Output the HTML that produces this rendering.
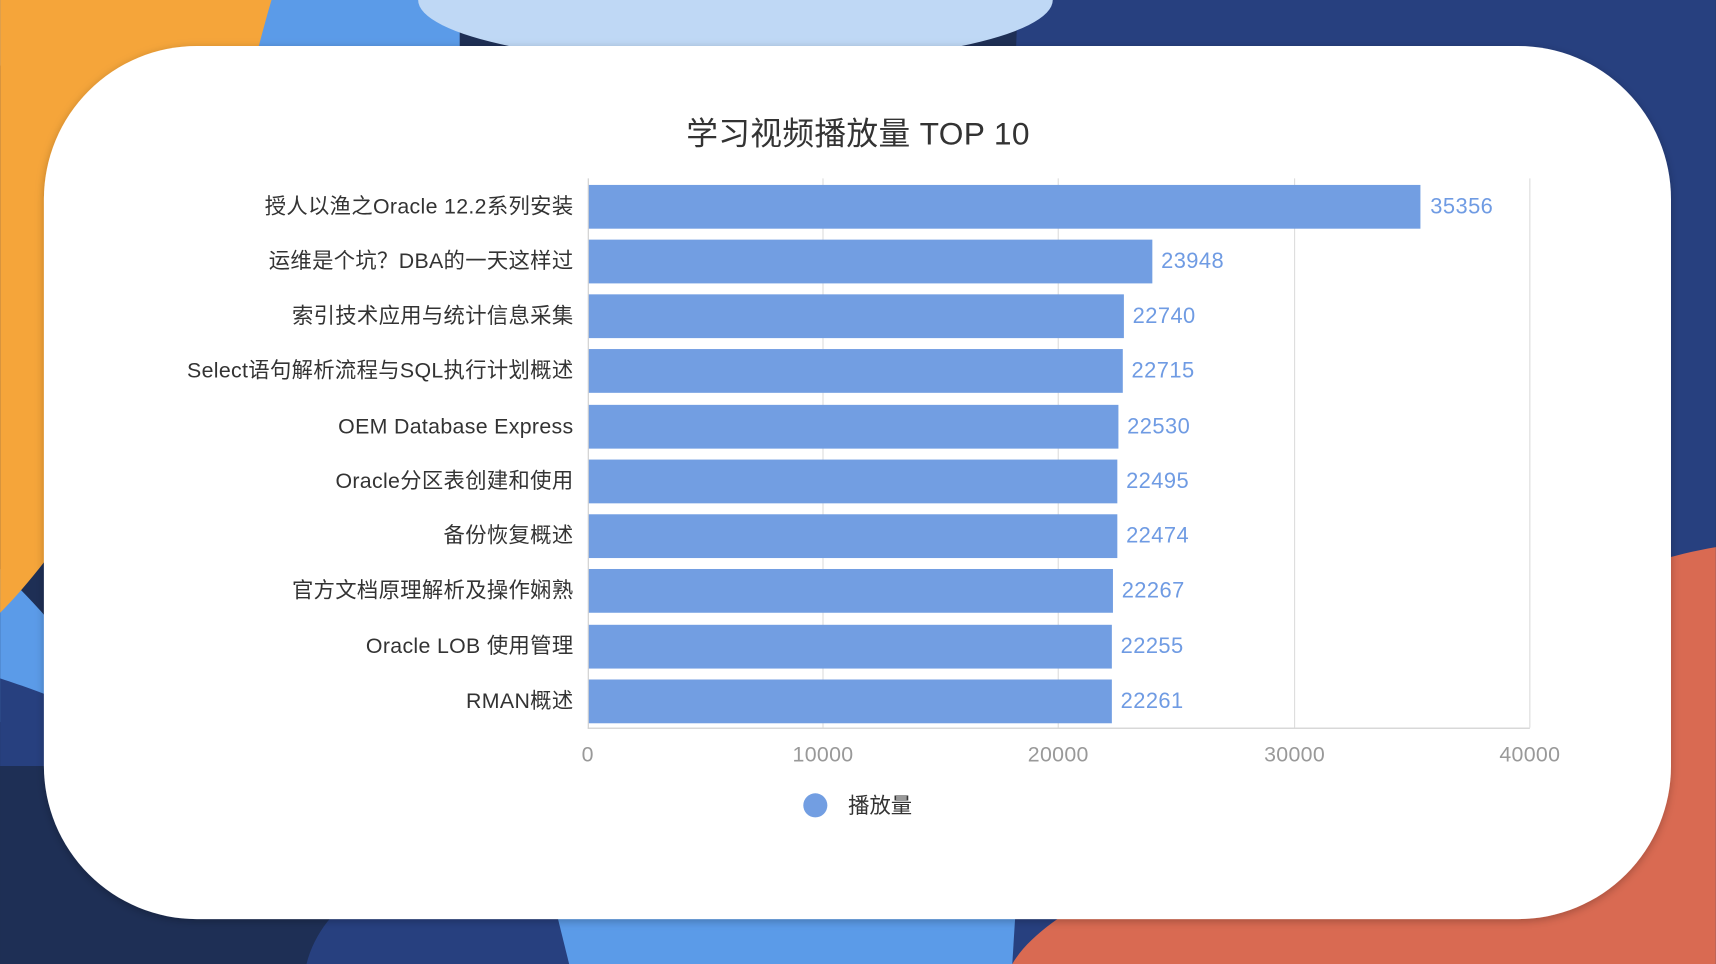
<!DOCTYPE html>
<html><head><meta charset="utf-8"><style>
html,body{margin:0;padding:0;width:1716px;height:964px;overflow:hidden;background:#1e2f55}
svg{display:block}
text{font-family:"Liberation Sans","Noto Sans CJK SC",sans-serif}
</style></head><body>
<svg width="1716" height="964" viewBox="0 0 1568 881" xmlns="http://www.w3.org/2000/svg">
<defs><filter id="sh" x="-5%" y="-5%" width="110%" height="110%"><feDropShadow dx="0" dy="2" stdDeviation="4" flood-color="#000" flood-opacity="0.25"/></filter></defs>
<rect width="1568" height="881" fill="#1e2f55"/>
<path d="M930 0 H1568 V881 H900 Z" fill="#27407f"/>
<path d="M1568 500 C1450 520 1300 600 1200 700 C1100 780 960 820 925 881 H1568 Z" fill="#d96a52"/>
<path d="M280 881 C300 800 420 760 520 800 C560 820 560 860 570 881 Z" fill="#27407f"/>
<path d="M500 800 C600 760 800 760 930 800 L925 881 H520 Z" fill="#5b9be8"/>
<path d="M0 0 H420 V60 H0 Z" fill="#5b9be8"/>
<path d="M0 520 C40 560 80 600 80 640 L0 660 Z" fill="#5b9be8"/>
<path d="M0 620 C60 640 120 660 60 700 L0 700 Z" fill="#27407f"/>
<path d="M0 0 H248 C230 60 200 200 150 320 C100 440 40 520 0 560 Z" fill="#f5a53a"/>
<ellipse cx="672" cy="0" rx="290" ry="60" fill="#bfd8f5"/>
<rect x="40" y="42" width="1487" height="798" rx="140" ry="140" fill="#fff" filter="url(#sh)"/>
<text x="784" y="132" text-anchor="middle" font-size="29" fill="#333" letter-spacing="0.3">学习视频播放量 TOP 10</text>
<g stroke="#dcdcdc" stroke-width="1">
<line x1="752" y1="163" x2="752" y2="665"/><line x1="967" y1="163" x2="967" y2="665"/>
<line x1="1183" y1="163" x2="1183" y2="665"/><line x1="1398" y1="163" x2="1398" y2="665"/>
</g>
<line x1="537.5" y1="163" x2="537.5" y2="666" stroke="#ccc"/>
<line x1="537" y1="665.5" x2="1398" y2="665.5" stroke="#ccc"/>
<g fill="#729ee2">
<rect x="538" y="169" width="760" height="40"/>
<rect x="538" y="219" width="515" height="40"/>
<rect x="538" y="269" width="489" height="40"/>
<rect x="538" y="319" width="488" height="40"/>
<rect x="538" y="370" width="484" height="40"/>
<rect x="538" y="420" width="483" height="40"/>
<rect x="538" y="470" width="483" height="40"/>
<rect x="538" y="520" width="479" height="40"/>
<rect x="538" y="571" width="478" height="40"/>
<rect x="538" y="621" width="478" height="40"/>
</g>
<g font-size="19.5" fill="#333" text-anchor="end" letter-spacing="0.3">
<text x="524" y="195">授人以渔之Oracle 12.2系列安装</text>
<text x="524" y="245">运维是个坑？DBA的一天这样过</text>
<text x="524" y="295">索引技术应用与统计信息采集</text>
<text x="524" y="345">Select语句解析流程与SQL执行计划概述</text>
<text x="524" y="396">OEM Database Express</text>
<text x="524" y="446">Oracle分区表创建和使用</text>
<text x="524" y="496">备份恢复概述</text>
<text x="524" y="546">官方文档原理解析及操作娴熟</text>
<text x="524" y="597">Oracle LOB 使用管理</text>
<text x="524" y="647">RMAN概述</text>
</g>
<g font-size="20" fill="#6f9be3" letter-spacing="0.4">
<text x="1307" y="195">35356</text>
<text x="1061" y="245">23948</text>
<text x="1035" y="295">22740</text>
<text x="1034" y="345">22715</text>
<text x="1030" y="396">22530</text>
<text x="1029" y="446">22495</text>
<text x="1029" y="496">22474</text>
<text x="1025" y="546">22267</text>
<text x="1024" y="597">22255</text>
<text x="1024" y="647">22261</text>
</g>
<g font-size="19.5" fill="#999" text-anchor="middle" letter-spacing="0.3">
<text x="537" y="696">0</text><text x="752" y="696">10000</text><text x="967" y="696">20000</text>
<text x="1183" y="696">30000</text><text x="1398" y="696">40000</text>
</g>
<circle cx="745" cy="736" r="11" fill="#729ee2"/>
<text x="775" y="743" font-size="19.5" fill="#333">播放量</text>
</svg>
</body></html>
